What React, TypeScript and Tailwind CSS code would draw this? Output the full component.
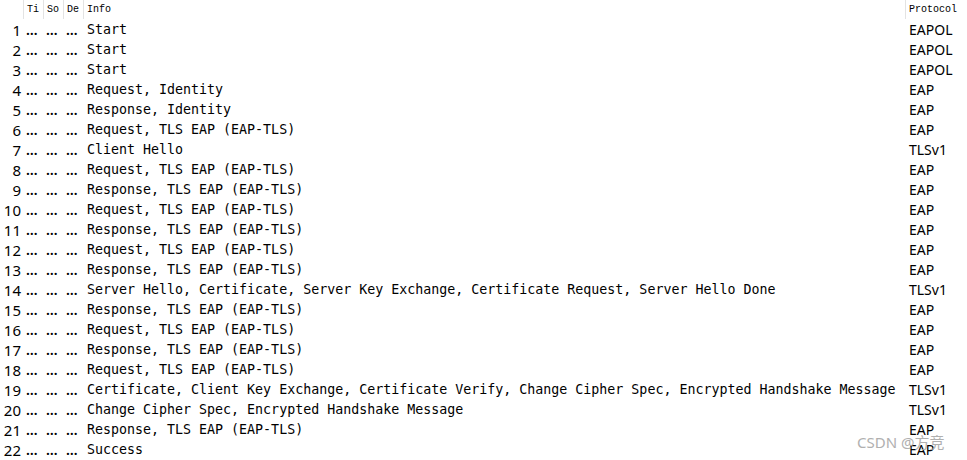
import React from 'react';

type Packet = {
    no: number;
    info: string;
    protocol: string;
};

const packets: Packet[] = [
    { no: 1, info: 'Start', protocol: 'EAPOL' },
    { no: 2, info: 'Start', protocol: 'EAPOL' },
    { no: 3, info: 'Start', protocol: 'EAPOL' },
    { no: 4, info: 'Request, Identity', protocol: 'EAP' },
    { no: 5, info: 'Response, Identity', protocol: 'EAP' },
    { no: 6, info: 'Request, TLS EAP (EAP-TLS)', protocol: 'EAP' },
    { no: 7, info: 'Client Hello', protocol: 'TLSv1' },
    { no: 8, info: 'Request, TLS EAP (EAP-TLS)', protocol: 'EAP' },
    { no: 9, info: 'Response, TLS EAP (EAP-TLS)', protocol: 'EAP' },
    { no: 10, info: 'Request, TLS EAP (EAP-TLS)', protocol: 'EAP' },
    { no: 11, info: 'Response, TLS EAP (EAP-TLS)', protocol: 'EAP' },
    { no: 12, info: 'Request, TLS EAP (EAP-TLS)', protocol: 'EAP' },
    { no: 13, info: 'Response, TLS EAP (EAP-TLS)', protocol: 'EAP' },
    { no: 14, info: 'Server Hello, Certificate, Server Key Exchange, Certificate Request, Server Hello Done', protocol: 'TLSv1' },
    { no: 15, info: 'Response, TLS EAP (EAP-TLS)', protocol: 'EAP' },
    { no: 16, info: 'Request, TLS EAP (EAP-TLS)', protocol: 'EAP' },
    { no: 17, info: 'Response, TLS EAP (EAP-TLS)', protocol: 'EAP' },
    { no: 18, info: 'Request, TLS EAP (EAP-TLS)', protocol: 'EAP' },
    { no: 19, info: 'Certificate, Client Key Exchange, Certificate Verify, Change Cipher Spec, Encrypted Handshake Message', protocol: 'TLSv1' },
    { no: 20, info: 'Change Cipher Spec, Encrypted Handshake Message', protocol: 'TLSv1' },
    { no: 21, info: 'Response, TLS EAP (EAP-TLS)', protocol: 'EAP' },
    { no: 22, info: 'Success', protocol: 'EAP' },
];

const cols = 'grid grid-cols-[23px_20px_20px_20px_822px_62px]';

export default function App() {
    return (
        <div className="relative w-[967px] h-[460px] bg-white overflow-hidden text-black">
            {/* header */}
            <div className={`${cols} h-[19px] items-stretch font-['Liberation_Mono',monospace] text-[10px] leading-none text-black`}>
                <div />
                <div className="border-l border-[#e3e3e3] pl-[3px] flex items-center">Ti</div>
                <div className="border-l border-[#e3e3e3] pl-[3px] flex items-center">So</div>
                <div className="border-l border-[#e3e3e3] pl-[3px] flex items-center">De</div>
                <div className="border-l border-[#e3e3e3] pl-[3px] flex items-center">Info</div>
                <div className="border-l border-[#e3e3e3] pl-[3px] flex items-center">Protocol</div>
            </div>

            {packets.map(p => (
                <div key={p.no} className={`${cols} h-[20px] pt-[2px] items-center`}>
                    <div className="text-right pr-[2px] font-['Noto_Sans',sans-serif] text-[15px] leading-none">{p.no}</div>
                    <div className="pl-[3px] font-['Noto_Sans',sans-serif] text-[14px] font-semibold leading-none">…</div>
                    <div className="pl-[3px] font-['Noto_Sans',sans-serif] text-[14px] font-semibold leading-none">…</div>
                    <div className="pl-[3px] font-['Noto_Sans',sans-serif] text-[14px] font-semibold leading-none">…</div>
                    <div className="pl-[4px] font-['DejaVu_Sans_Mono',monospace] text-[13.3px] leading-none whitespace-nowrap">{p.info}</div>
                    <div className="pl-[4px] font-['Noto_Sans',sans-serif] text-[14px] leading-none whitespace-nowrap">{p.protocol}</div>
                </div>
            ))}

            {/* watermark */}
            <div className="absolute left-[857px] top-[435px] font-['Noto_Sans','Noto_Sans_CJK_SC',sans-serif] text-[15px] leading-none text-[#a8a8a8] opacity-90 whitespace-nowrap">
                CSDN @方竞
            </div>
        </div>
    );
}
